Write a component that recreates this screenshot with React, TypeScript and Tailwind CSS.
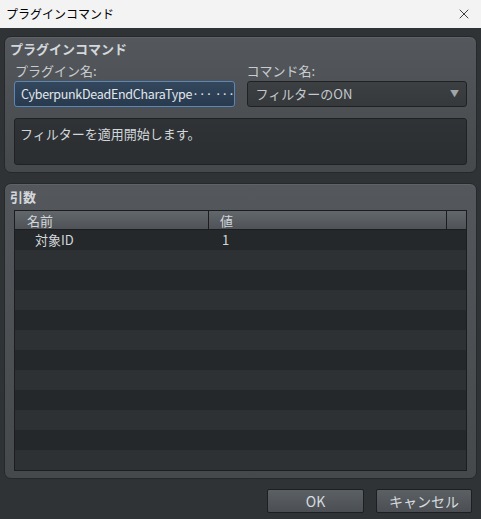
import { X } from 'lucide-react';

const font = "font-['Noto_Sans_CJK_JP','Noto_Sans',sans-serif]";

const rows = Array.from({ length: 12 }, (_, i) => i);

function Panel({ title, children, className }: { title: string; children: React.ReactNode; className?: string }) {
  return (
    <div
      className={`rounded-[7px] border border-[#26292b] bg-gradient-to-b from-[#54585c] to-[#45494c] shadow-[inset_0_1px_0_#5e6367] ${className ?? ''}`}
    >
      <div className="px-[5px] text-[13px] font-bold text-[#d4d8dc]">{title}</div>
      {children}
    </div>
  );
}

export default function App() {
  return (
    <div className={`flex h-[519px] w-[481px] flex-col bg-[#303336] ${font}`}>
      {/* Title bar */}
      <div className="flex h-[28px] items-center justify-between bg-[#f3f3f3] pl-[6px] pr-[9px]">
        <span className="text-[12px] text-black">プラグインコマンド</span>
        <X className="h-[16px] w-[16px] text-[#222]" strokeWidth={1.3} />
      </div>

      <div className="flex flex-col px-[4px] pt-[8px]">
        {/* Plugin command panel */}
        <Panel title="プラグインコマンド" className="h-[137px] [&>div:first-child]:h-[24px] [&>div:first-child]:leading-[24px]">
          <div className="grid grid-cols-2 gap-[12px] px-[9px]">
            <div>
              <div className="h-[20px] pl-[1px] text-[13px] leading-[20px] text-[#c8ccd0]">プラグイン名:</div>
              <div className="flex h-[26px] items-center overflow-hidden whitespace-nowrap rounded-[3px] border border-[#5a87b6] bg-gradient-to-b from-[#33475d] to-[#283a4e] px-[6px] text-[12.5px] tracking-[-0.3px] text-[#e2e6ea]">
                CyberpunkDeadEndCharaType··· ···
              </div>
            </div>
            <div>
              <div className="h-[20px] text-[13px] leading-[20px] text-[#c8ccd0]">コマンド名:</div>
              <div className="flex h-[26px] items-center justify-between rounded-[3px] border border-[#1f2123] bg-gradient-to-b from-[#3d4043] to-[#36393c] pl-[8px] pr-[7px] text-[13px] text-[#c4c8cc]">
                <span>フィルターのON</span>
                <span className="text-[9px] text-[#a2a6aa]">▼</span>
              </div>
            </div>
          </div>
          <div className="mx-[9px] mt-[11px] h-[47px] rounded-[3px] border border-[#1f2123] bg-gradient-to-b from-[#303336] to-[#2b2e31] px-[5px] pt-[5px] text-[13px] text-[#d2d6da]">
            フィルターを適用開始します。
          </div>
        </Panel>

        {/* Arguments panel */}
        <Panel title="引数" className="mt-[10px] h-[296px] [&>div:first-child]:h-[26px] [&>div:first-child]:leading-[26px]">
          <div className="mx-[9px] h-[261px] overflow-hidden border border-[#1b1d1f] bg-[#2d3134]">
            <div className="flex h-[19px] border-b border-[#1b1d1f] bg-gradient-to-b from-[#62676c] to-[#4f5358] text-[13px] leading-[19px] text-[#d2d6da]">
              <div className="w-[194px] border-r border-[#1b1d1f] pl-[12px]">名前</div>
              <div className="w-[238px] border-r border-[#1b1d1f] pl-[11px]">値</div>
              <div className="flex-1" />
            </div>
            {rows.map((i) => (
              <div
                key={i}
                className={`flex h-[20px] text-[13px] leading-[20px] text-[#d2d6da] ${i % 2 === 0 ? 'bg-[#25282b]' : 'bg-[#2d3134]'}`}
              >
                {i === 0 && (
                  <>
                    <div className="w-[195px] pl-[20px]">対象ID</div>
                    <div className="pl-[12px]">1</div>
                  </>
                )}
              </div>
            ))}
          </div>
        </Panel>
      </div>

      {/* Buttons */}
      <div className="mt-[10px] flex justify-end gap-[12px] pr-[9px]">
        <button className="h-[24px] w-[97px] rounded-[2px] border border-[#1d1f21] bg-gradient-to-b from-[#5b6064] to-[#4b4f53] text-[14px] text-[#d6dade]">
          OK
        </button>
        <button className="h-[24px] w-[96px] rounded-[2px] border border-[#1d1f21] bg-gradient-to-b from-[#5b6064] to-[#4b4f53] text-[14px] text-[#d6dade]">
          キャンセル
        </button>
      </div>
    </div>
  );
}
